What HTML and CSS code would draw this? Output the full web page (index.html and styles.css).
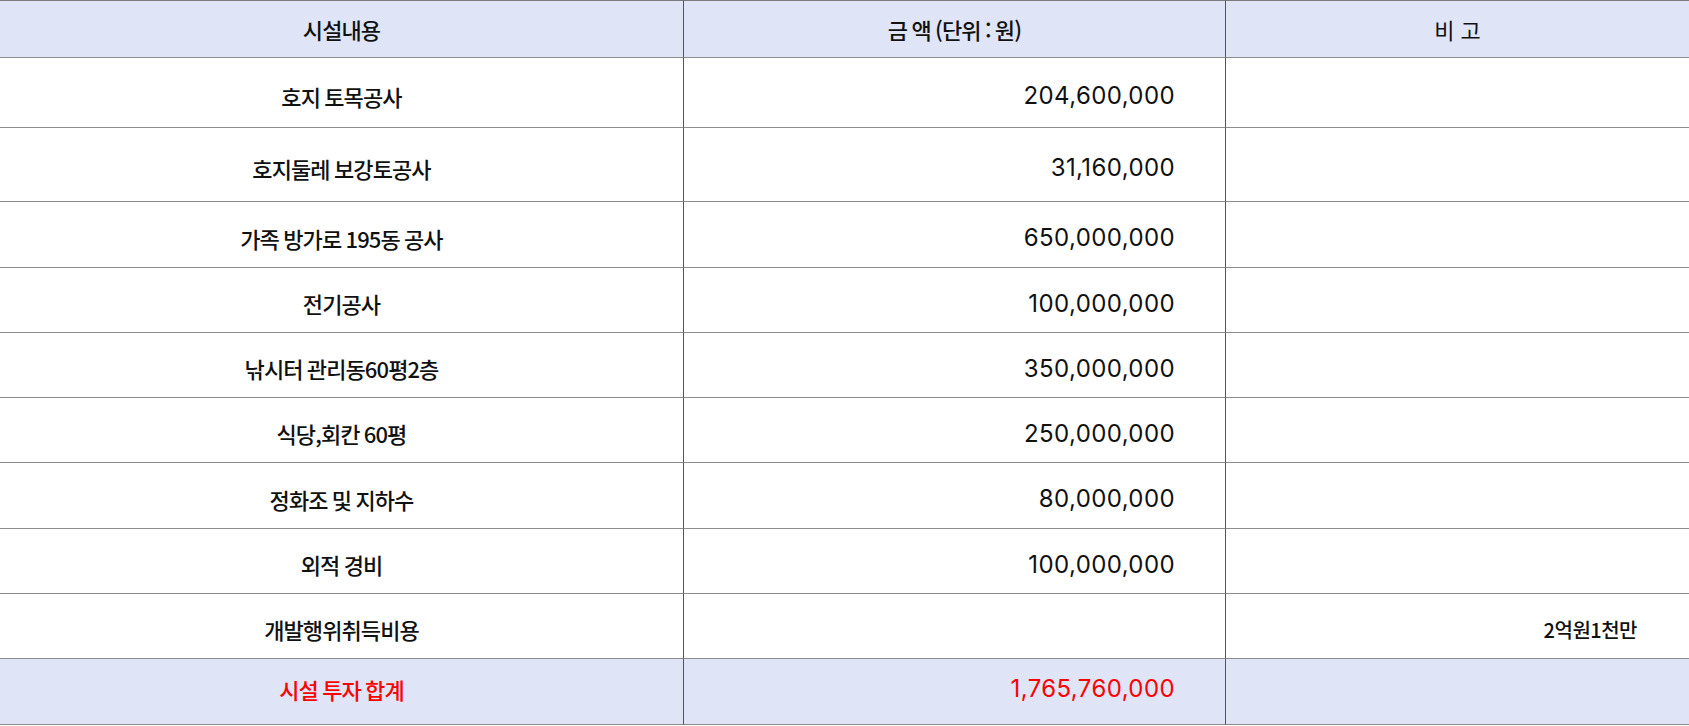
FILE: index.html
```html
<!DOCTYPE html>
<html lang="ko">
<head>
<meta charset="utf-8">
<title>시설 투자 내역</title>
<link rel="stylesheet" href="styles.css">
</head>
<body>
<table class="cost-table">
  <colgroup>
    <col class="col-name">
    <col class="col-amount">
    <col class="col-note">
  </colgroup>
  <thead>
    <tr class="row-head">
      <th class="cell">시설내용</th>
      <th class="cell">금 액 (단위 : 원)</th>
      <th class="cell cell-last note-head">비 고</th>
    </tr>
  </thead>
  <tbody>
    <tr class="row r1">
      <td class="cell name">호지 토목공사</td>
      <td class="cell amount">204,600,000</td>
      <td class="cell cell-last note"></td>
    </tr>
    <tr class="row r2">
      <td class="cell name">호지둘레 보강토공사</td>
      <td class="cell amount">31,160,000</td>
      <td class="cell cell-last note"></td>
    </tr>
    <tr class="row r3">
      <td class="cell name">가족 방가로 195동 공사</td>
      <td class="cell amount">650,000,000</td>
      <td class="cell cell-last note"></td>
    </tr>
    <tr class="row r4">
      <td class="cell name">전기공사</td>
      <td class="cell amount">100,000,000</td>
      <td class="cell cell-last note"></td>
    </tr>
    <tr class="row r4">
      <td class="cell name">낚시터 관리동60평2층</td>
      <td class="cell amount">350,000,000</td>
      <td class="cell cell-last note"></td>
    </tr>
    <tr class="row r4">
      <td class="cell name">식당,회칸 60평</td>
      <td class="cell amount">250,000,000</td>
      <td class="cell cell-last note"></td>
    </tr>
    <tr class="row r3">
      <td class="cell name">정화조 및 지하수</td>
      <td class="cell amount">80,000,000</td>
      <td class="cell cell-last note"></td>
    </tr>
    <tr class="row r4">
      <td class="cell name">외적 경비</td>
      <td class="cell amount">100,000,000</td>
      <td class="cell cell-last note"></td>
    </tr>
    <tr class="row r4">
      <td class="cell name">개발행위취득비용</td>
      <td class="cell amount"></td>
      <td class="cell cell-last note">2억원1천만</td>
    </tr>
    <tr class="row r3 row-total">
      <td class="cell name">시설 투자 합계</td>
      <td class="cell amount">1,765,760,000</td>
      <td class="cell cell-last note"></td>
    </tr>
  </tbody>
</table>
</body>
</html>
```

FILE: styles.css
```css
html, body {
  margin: 0;
  padding: 0;
  background: #ffffff;
}

.cost-table {
  width: 1689px;
  table-layout: fixed;
  border-collapse: separate;
  border-spacing: 0;
  font-family: "Noto Sans CJK KR", "Noto Sans", sans-serif;
  color: #111111;
}

.col-name { width: 684px; }
.col-amount { width: 542px; }
.col-note { width: 463px; }

.cell {
  padding: 0;
  border-bottom: 1px solid #8c8c8c;
  border-right: 1px solid #555555;
  font-size: 22px;
  font-weight: 500;
  letter-spacing: -0.9px;
  word-spacing: -1px;
  vertical-align: middle;
  white-space: nowrap;
}

.cell-last {
  border-right: none;
}

.row-head {
  height: 58px;
  background: #dfe5f6;
}

.row-head .cell {
  border-top: 1px solid #7a7a7a;
  text-align: center;
  font-weight: 500;
}

.row-head .note-head {
  font-size: 22px;
  letter-spacing: 0;
  word-spacing: 0;
  font-weight: 400;
}

.r1 { height: 70px; }
.r2 { height: 74px; }
.r3 { height: 66px; }
.r4 { height: 65px; }

.name {
  text-align: center;
  padding-top: 6px;
}

.amount {
  text-align: right;
  padding-right: 50px;
  padding-top: 6px;
  font-family: "Inter", "Noto Sans", sans-serif;
  font-weight: 400;
  font-size: 24px;
  letter-spacing: 0.4px;
  word-spacing: 0;
}

.note {
  text-align: right;
  padding-right: 52px;
  padding-top: 6px;
  font-size: 20px;
  letter-spacing: -0.5px;
}

.row-total {
  background: #dfe5f6;
  color: #ff0000;
}

.row-total .name,
.row-total .amount {
  padding-top: 0;
  padding-bottom: 6px;
}
```
